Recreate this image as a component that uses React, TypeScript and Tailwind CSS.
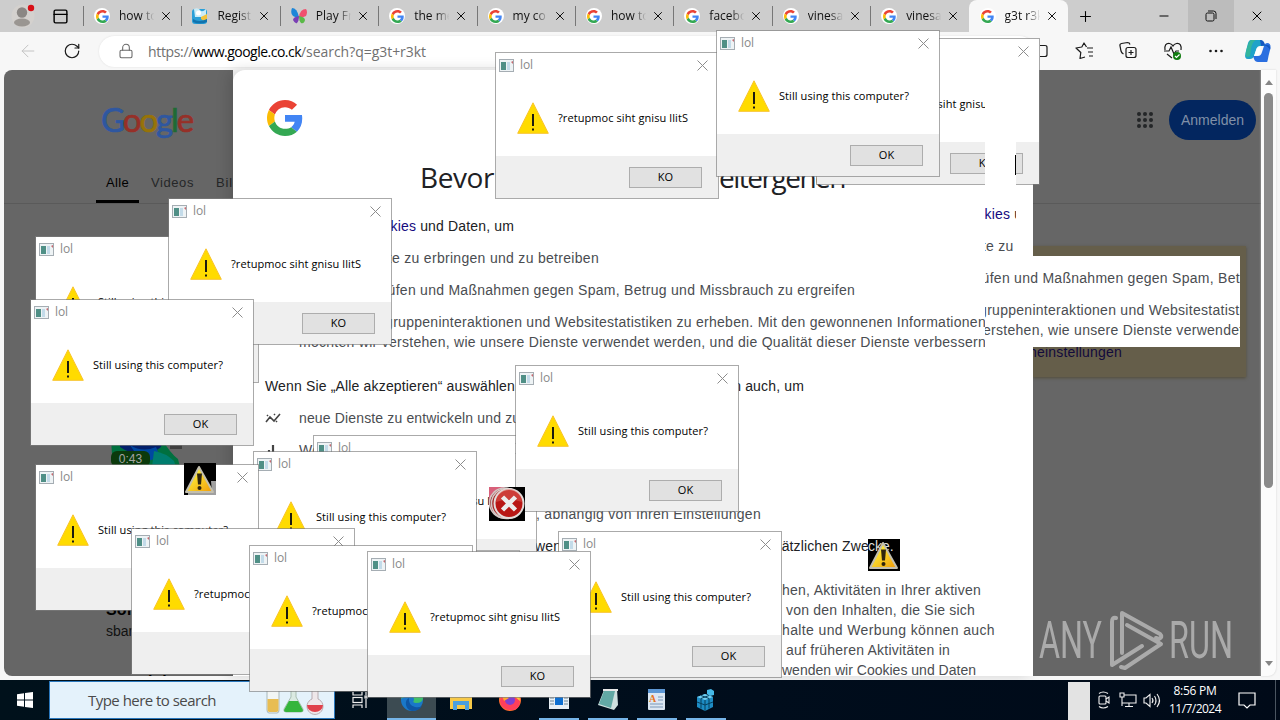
import { ReactNode, useLayoutEffect, useRef, useState } from 'react'
import { ArrowLeft, Lock, Minus, PanelTop, Plus, RotateCw, X } from 'lucide-react'
import clsx from 'clsx'

const UI = "font-['Open_Sans','Noto_Sans',sans-serif]"
const ARIAL = "font-['Liberation_Sans',Arial,sans-serif]"

// Spreads its text so that it is exactly `w` pixels wide
function Fit({ w, className, children }: { w: number; className?: string; children: ReactNode }) {
  const ref = useRef<HTMLSpanElement>(null)
  const [spacing, setSpacing] = useState(0)

  useLayoutEffect(() => {
    const el = ref.current
    if (!el) return
    const natural = el.getBoundingClientRect().width
    setSpacing((w - natural) / (el.textContent || ' ').length)
  }, [w])

  return (
    <span ref={ref} className={clsx('inline-block w-fit whitespace-pre', className)} style={{ letterSpacing: spacing }}>
      {children}
    </span>
  )
}

function GoogleG({ className }: { className: string }) {
  return (
    <svg viewBox="0 0 48 48" className={className}>
      <path fill="#EA4335" d="M24 9.5c3.54 0 6.71 1.22 9.21 3.6l6.85-6.85C35.9 2.38 30.47 0 24 0 14.62 0 6.51 5.38 2.56 13.22l7.98 6.19C12.43 13.72 17.74 9.5 24 9.5z" />
      <path fill="#4285F4" d="M46.98 24.55c0-1.57-.15-3.09-.38-4.55H24v9.02h12.94c-.58 2.96-2.26 5.48-4.78 7.18l7.73 6c4.51-4.18 7.09-10.36 7.09-17.65z" />
      <path fill="#FBBC05" d="M10.53 28.59c-.48-1.45-.76-2.99-.76-4.59s.27-3.14.76-4.59l-7.98-6.19C.92 16.46 0 20.12 0 24c0 3.88.92 7.54 2.56 10.78l7.97-6.19z" />
      <path fill="#34A853" d="M24 48c6.48 0 11.93-2.13 15.89-5.81l-7.73-6c-2.15 1.45-4.92 2.3-8.16 2.3-6.26 0-11.57-4.22-13.47-9.91l-7.98 6.19C6.51 42.62 14.62 48 24 48z" />
    </svg>
  )
}

/* ---------- browser chrome ---------- */

const tabs = [
  { title: 'how to', icon: 'google' },
  { title: 'Registr', icon: 'sun' },
  { title: 'Play Fr', icon: 'butterfly' },
  { title: 'the me', icon: 'google' },
  { title: 'my co', icon: 'google' },
  { title: 'how to', icon: 'google' },
  { title: 'facebo', icon: 'google' },
  { title: 'vinesa', icon: 'google' },
  { title: 'vinesa', icon: 'google' },
]

function TabIcon({ icon }: { icon: string }) {
  if (icon === 'sun') {
    return (
      <svg viewBox="0 0 16 16" className="size-4">
        <rect x="0" y="1" width="15" height="15" rx="3" fill="#2a9fd8" />
        <path d="M2 1q4-2 6 1t6-1v8H3z" fill="#c9ecf8" />
        <circle cx="6.500" cy="5" r="2.500" fill="#fff" />
        <path d="M9 9l6-3v5q-2 3-6 0z" fill="#f3c33b" />
        <path d="M1 11q6 4 14 0v3q-7 3-14 0z" fill="#1173ae" />
      </svg>
    )
  }
  if (icon === 'butterfly') {
    return (
      <svg viewBox="0 0 16 16" className="size-4">
        <path d="M8 9Q6 0 1 0q-2 5 1 8 3 2 6 1z" fill="#1d86d8" />
        <path d="M8 8q-6 1-6 4 2 4 4 3 2-2 2-7z" fill="#7a3fb4" />
        <path d="M8 9q1-8 7-8 2 3 0 7-4 2-7 1z" fill="#f0506e" />
        <path d="M8 8q6 1 6 4-1 4-4 3-2-2-2-7z" fill="#59b947" />
      </svg>
    )
  }
  return (
    <span className="flex size-4 items-center justify-center rounded-full bg-white">
      <GoogleG className="size-[13px]" />
    </span>
  )
}

function TabBody({ title, icon }: { title: string; icon: string }) {
  return (
    <>
      <TabIcon icon={icon} />
      <span className="ml-[9px] w-[36px] overflow-hidden text-[12px] whitespace-nowrap text-[#111] [mask-image:linear-gradient(to_right,black_60%,transparent_98%)]">
        {title}
      </span>
      <X className="ml-[4px] size-[14px] shrink-0" strokeWidth={1.6} />
    </>
  )
}

function TabStrip() {
  return (
    <div className="flex h-8 shrink-0 bg-[#cdcdcd]">
      <div className="flex w-[83px] shrink-0 items-center">
        <svg viewBox="0 0 24 24" className="ml-[11px] size-6">
          <circle cx="12" cy="12" r="11.500" fill="#d4d1ce" />
          <circle cx="11" cy="8.500" r="5.200" fill="#8b8784" />
          <ellipse cx="11" cy="18.500" rx="8" ry="4" fill="#9a9692" />
          <circle cx="20" cy="4" r="3.200" fill="#d80f16" />
        </svg>
        <PanelTop className="ml-[17px] size-[17px]" strokeWidth={2} />
      </div>
      {tabs.map((t, i) => (
        <div key={i} className="flex w-[98.400px] shrink-0 items-center">
          <div className="mr-[10px] h-5 w-px bg-[#777]" />
          <TabBody {...t} />
        </div>
      ))}
      <div className="flex w-[99px] shrink-0 items-center rounded-t-lg bg-[#f7f7f7] pl-[11px]">
        <TabBody title="g3t r3k" icon="google" />
      </div>
      <div className="flex flex-1 items-center">
        <Plus className="ml-[9px] size-[17px]" strokeWidth={1.5} />
        <Minus className="ml-[63px] size-[14px]" strokeWidth={1.7} />
        <div className="ml-[17px] flex h-8 w-[46px] items-center justify-center bg-[#bcbcbc]">
          <svg viewBox="0 0 12 12" className="size-[12px]" fill="none" stroke="#111">
            <rect x="1" y="3" width="8" height="8" rx="1.500" />
            <path d="M3 1h5.500Q11 1 11 3.500V9" />
          </svg>
        </div>
        <X className="ml-[15px] size-[16px]" strokeWidth={1.5} />
      </div>
    </div>
  )
}

function ToolbarIcons() {
  return (
    <svg viewBox="0 0 240 38" className="h-[38px] w-[240px]" fill="none" stroke="#1a1a1a" strokeWidth="1.200">
      <path d="M0 13.500h5q2 0 2 2v7q0 2-2 2H0" />
      {/* favourites */}
      <path d="M45 25l-5 1.500.8-6L36 16l5.800-1L44 11l2.500 4M47 16h6M48 20h5M49 24h4" strokeLinejoin="round" />
      {/* collections */}
      <rect x="86" y="15.500" width="10" height="10" rx="2" />
      <path d="M91 18v5M88.500 20.500h5M83.500 22q-2-1-2.500-3L80 14q-.5-2 1.500-2.500l6-1q2 0 2.500 2" />
      {/* essentials */}
      <path d="M125 18q-1-7 4.500-6.500Q132 12 133 14q1-2 3.500-2.500Q142 11 141 18M124 19h5l2-4 3 7 2-3h3M127 22l5 4" />
      <circle cx="137" cy="24" r="4" fill="#107c10" stroke="none" />
      <path d="M135 24l1.500 1.500 3-3" stroke="#fff" />
      <g fill="#1a1a1a" stroke="none">
        <circle cx="170.500" cy="19" r="1.300" />
        <circle cx="176" cy="19" r="1.300" />
        <circle cx="181.500" cy="19" r="1.300" />
      </g>
      {/* copilot */}
      <g stroke="none">
        <path d="M211 8h9q3 0 4 3l1 3h-5q-3 0-4 4l-2 6q-1 3-4 3h-2q-4 0-2.500-6l2-8q1-5 3.500-5z" fill="#1fa3c9" />
        <path d="M211 8h5q-4 2-5 9l-1 7q-3 2-4 0-1-3 2-11 1-4 3-5z" fill="#34b59c" />
        <path d="M227 30h-9q-3 0-4-3l-1-3h5q3 0 4-4l2-6q1-3 3-3 4 0 3.500 5l-2 8q-1 6-1.500 6z" fill="#2b6fe0" />
        <path d="M220 8q4 0 5 5l3 0q3 1 2 5-3-6-9-4z" fill="#1557c0" />
        <path d="M217 16l4-1-2 8-5 1z" fill="#fff" />
      </g>
    </svg>
  )
}

function Toolbar() {
  return (
    <div className="flex h-[38px] shrink-0 items-center bg-[#f7f7f7]">
      <ArrowLeft className="ml-[18px] size-5 shrink-0 text-[#c4c4c4]" strokeWidth={1.2} />
      <RotateCw className="ml-[25px] size-[18px] shrink-0 text-[#1a1a1a]" strokeWidth={1.6} />
      <div className="ml-[18px] flex h-[31px] w-[936px] shrink-0 items-center rounded-full bg-white shadow-[0_0_2px_#ddd]">
        <Lock className="ml-[19px] size-4 text-[#6a6a6a]" strokeWidth={1.6} />
        <span className="ml-[14px] flex text-[14px] text-[#707070]">
          <Fit w={45}>https://</Fit>
          <Fit w={108} className="text-black">www.google.co.ck</Fit>
          <Fit w={125}>/search?q=g3t+r3kt</Fit>
        </span>
      </div>
      <div className="ml-[5px] shrink-0">
        <ToolbarIcons />
      </div>
    </div>
  )
}

/* ---------- page ---------- */

const bullet = (path: ReactNode) => (
  <svg viewBox="0 0 16 16" className="mt-[2px] mr-[18px] size-4 shrink-0" fill="none" stroke="#444" strokeWidth="1.600">
    {path}
  </svg>
)

function ConsentText() {
  return (
    <div className={clsx('flex w-[760px] flex-col gap-3 text-[14px] leading-5 text-[#4a4d51]', ARIAL)}>
      <p className="h-5 text-[#202124]">
        <Fit w={249}>
          Wir verwenden <span className="text-[#140a80]">Cookies</span> und Daten, um
        </Fit>
      </p>
      <p className="h-5 pl-[34px]">
        <Fit w={93}>Google-Dienst</Fit>
        <Fit w={207}>e zu erbringen und zu betreiben</Fit>
      </p>
      <p className="h-5 pl-[34px]"><Fit w={556}>Ausfälle zu prüfen und Maßnahmen gegen Spam, Betrug und Missbrauch zu ergreifen</Fit></p>
      <div className="flex flex-col pl-[34px]">
        <Fit w={687}>Daten zu Zielgruppeninteraktionen und Websitestatistiken zu erheben. Mit den gewonnenen Informationen</Fit>
        <Fit w={687}>möchten wir verstehen, wie unsere Dienste verwendet werden, und die Qualität dieser Dienste verbessern</Fit>
      </div>
      <p className="mt-3 h-5 text-[#202124]">
        <Fit w={250}>Wenn Sie „Alle akzeptieren“ auswählen</Fit>
        <Fit w={289}>, verwenden wir Cookies und Daten auch, um</Fit>
      </p>
      <div className="flex h-5">
        {bullet(<path d="M1 12l4-5 4 4 6-7M9 5l1-1M2 5l1 1M11 11l1 1" />)}
        <Fit w={296}>neue Dienste zu entwickeln und zu verbessern</Fit>
      </div>
      <div className="flex h-5">
        {bullet(<path d="M4 14V8M8 14V3M12 14v-4" strokeWidth="2.200" />)}
        <Fit w={330}>Werbung auszuliefern und ihre Wirkung zu messen</Fit>
      </div>
      <p className="h-5 pl-[34px]"><Fit w={230}>personalisierte Inhalte anzuzeigen</Fit></p>
      <p className="h-5 pl-[34px]">
        <Fit w={237}>personalisierte Werbung anzuzeigen</Fit>
        <Fit w={225}>, abhängig von Ihren Einstellungen</Fit>
      </p>
      <p className="h-5 text-[#202124]">
        <Fit w={270}>Wenn Sie „Alle ablehnen“ auswählen, ver</Fit>
        <Fit w={360}>wenden wir Cookies nicht für diese zusätzlichen Zwecke.</Fit>
      </p>
      <div className="mt-3 flex flex-col pl-[517px]">
        <Fit w={199}>hen, Aktivitäten in Ihrer aktiven</Fit>
        <Fit w={193}> von den Inhalten, die Sie sich</Fit>
        <Fit w={213}>halte und Werbung können auch</Fit>
        <Fit w={168}> auf früheren Aktivitäten in</Fit>
        <Fit w={194}>wenden wir Cookies und Daten</Fit>
      </div>
    </div>
  )
}

function AnyRun() {
  return (
    <svg viewBox="0 0 196 64" className="h-16 w-[196px] opacity-80" fill="#bcbcbc">
      <g fontFamily="Roboto, sans-serif" fontSize="52" fontWeight="400">
        <text x="1" y="49" textLength="63" lengthAdjust="spacingAndGlyphs">ANY</text>
        <text x="131" y="49" textLength="64" lengthAdjust="spacingAndGlyphs">RUN</text>
      </g>
      <g fill="none" stroke="#bcbcbc" strokeWidth="4" strokeLinejoin="round" strokeLinecap="round">
        <path d="M84 44V4l38 21q3 3-1 5l-3-1" />
        <path d="M78 9q-4-1-4 4v43l30-19" />
        <path d="M89 16l34 19-36 24-4-1" />
      </g>
    </svg>
  )
}

function Page() {
  return (
    <div className="flex h-[606px] shrink-0 pl-1">
      <div className={clsx('flex w-[229px] shrink-0 flex-col overflow-hidden rounded-l-lg bg-[#666] [&>*]:shrink-0', ARIAL)}>
        <div className="mt-[27px] ml-[97px] h-[44px] font-['Lato',sans-serif] text-[33px] leading-[44px] [-webkit-text-stroke:0.700px]">
          <Fit w={91}>
            <span className="text-[#2f57a0]">G</span>
            <span className="text-[#963028]">o</span>
            <span className="text-[#977308]">o</span>
            <span className="text-[#2f57a0]">g</span>
            <span className="text-[#1f6b34]">l</span>
            <span className="text-[#963028]">e</span>
          </Fit>
        </div>
        <div className="mt-[26px] flex h-[37px] border-b border-[#5a5a5a] pl-[92px] text-[13px] leading-[32px] whitespace-nowrap text-[#252628]">
          <span className="h-[36px] w-[43px] shrink-0 border-b-3 border-black pl-[10px] text-black"><Fit w={23}>Alle</Fit></span>
          <span className="pl-[12px]"><Fit w={43}>Videos</Fit></span>
          <span className="pl-[22px]"><Fit w={38}>Bilder</Fit></span>
        </div>
        <div className="mt-[235px] ml-[104px] flex h-[28px] w-[79px] items-end overflow-hidden rounded-lg">
          <svg viewBox="0 0 79 28" className="h-[28px] w-[79px] shrink-0">
            <path d="M4 0h50q8 14 16 20l2 8H8Q2 16 4 0z" fill="#00703f" />
            <path d="M12 0h42q2 9-8 12-20 6-34-4z" fill="#03206b" />
            <path d="M22 6q12 8 26 2l4 10-18 6z" fill="#0048a0" />
            <path d="M46 12q12 2 20 10l2 6H44z" fill="#007d6e" />
            <path d="M62 4h12v6H62z" fill="#3f3f3f" />
          </svg>
          <span className="-ml-[76px] w-[39px] rounded-md bg-[#0b3a0c] text-center text-[12px] leading-4 text-[#a5a5a5]">0:43</span>
        </div>
        <div className="mt-[133px] ml-[102px] text-[16px] leading-5 font-bold text-black">Software</div>
        <div className="mt-px ml-[102px] text-[14px] leading-5 text-[#111]">sbar...</div>
        <div className="mt-[31px] ml-[144px] text-[16px] leading-5 font-bold text-black">lol.exe</div>
      </div>

      <div className="h-[606px] w-[800px] shrink-0 overflow-hidden rounded-tl-xl bg-white pl-8 shadow-[-4px_0_14px_rgba(0,0,0,0.15)]">
        <GoogleG className="mt-[30px] ml-[2px] size-9" />
        <h1 className="mt-[22px] mb-[19px] pl-[155px] font-['Open_Sans',sans-serif] text-[28px] leading-[39px] text-[#202124]">
          <Fit w={74}>Bevor</Fit>
          <Fit w={225}> Sie zu Google w</Fit>
          <Fit w={126}>eitergehen</Fit>
        </h1>
        <ConsentText />
      </div>

      <div className={clsx('flex w-[228px] shrink-0 flex-col overflow-hidden bg-[#666]', ARIAL)}>
        <div className="flex h-[134px] items-start border-b border-[#5a5a5a] pt-[30px] pl-[104px]">
          <svg viewBox="0 0 16 16" className="mt-[12px] size-4" fill="#242628">
            {[2, 8, 14].map(x => [2, 8, 14].map(y => <circle key={`${x}-${y}`} cx={x} cy={y} r="2" />))}
          </svg>
          <div className="ml-[16px] flex h-10 w-[87px] items-center justify-center rounded-full bg-[#03265f] text-[14px] text-[#8090a8]">
            <Fit w={63}>Anmelden</Fit>
          </div>
        </div>
        <div className="mt-[42px] h-[131px] w-[213px] bg-[#655e4a] pt-[96px] shadow-[0_1px_3px_#524c38]">
          <p className="-ml-[4px] text-[14px] leading-5 text-[#120a3c]"><Fit w={93}>heinstellungen</Fit></p>
        </div>
        <div className="mt-auto mb-[3px] ml-[5px]"><AnyRun /></div>
      </div>

      <div className="flex w-[15px] shrink-0 flex-col items-center rounded-br-lg bg-[#fcfcfc] shadow-[0_0_2px_#ccc]">
        <div className="mt-[10px] border-x-4 border-b-5 border-x-transparent border-b-[#858585]" />
        <div className="mt-[8px] h-[395px] w-[9px] rounded-full bg-[#8b8b8b]" />
        <div className="mt-auto mb-[10px] border-x-4 border-t-5 border-x-transparent border-t-[#858585]" />
      </div>
    </div>
  )
}

/* ---------- message boxes ---------- */

function Dialog({ x, y, flipped }: { x: number; y: number; flipped?: boolean }) {
  return (
    <div
      className="absolute h-[147px] w-[224px] border border-[#7d7d7d]/65 bg-white bg-clip-padding text-[11px] text-black"
      style={{ left: x, top: y }}
    >
      <div className="flex h-[24px] items-center pl-[3px]">
        <svg viewBox="0 0 15 13" className="h-[13px] w-[15px]">
          <rect x=".500" y=".500" width="14" height="12" fill="#eef3f5" stroke="#a5adb3" />
          <rect x="2" y="3" width="5" height="8" fill="#4f8f86" />
          <rect x="8" y="3" width="3" height="8" fill="#c3dbe9" />
          <path d="M12 3l2-1v3z" fill="#c6696f" />
        </svg>
        <span className="ml-[6px] flex-1 text-[12px] text-[#8a8a8a]"><Fit w={13}>lol</Fit></span>
        <svg viewBox="0 0 11 11" className="mr-[10px] size-[11px]" stroke="#8c8c8c">
          <path d="M.5.5l10 10M10.500.5L.5 10.500" />
        </svg>
      </div>
      <div className="flex h-[79px] items-center pl-[21px]">
        <svg viewBox="0 0 32 32" className="mt-[2px] size-8">
          <path d="M16 .8L31.300 31.300H.7z" fill="#ffdb00" stroke="#f8c32c" />
          <path d="M16 12v12M16 26.500v2" stroke="#111" strokeWidth="1.900" />
        </svg>
        <Fit w={130} className="mt-[3px] ml-[9px]">{flipped ? '?retupmoc siht gnisu llitS' : 'Still using this computer?'}</Fit>
      </div>
      <div className="flex h-[42px] items-start justify-end bg-[#efefef] pt-[11px] pr-[16px]">
        <div className="flex h-[21px] w-[73px] items-center justify-center border border-[#adadad] bg-[#e1e1e1]">
          {flipped ? 'KO' : 'OK'}
        </div>
      </div>
    </div>
  )
}

function WarningStamp({ x, y, children }: { x: number; y: number; children?: ReactNode }) {
  return (
    <svg viewBox="0 0 32 32" className="absolute size-8" style={{ left: x, top: y }}>
      <defs>
        <linearGradient id="gold" x1="0" y1="0" x2="1" y2="1">
          <stop offset=".2" stopColor="#fff23a" />
          <stop offset="1" stopColor="#f09a08" />
        </linearGradient>
      </defs>
      <rect width="32" height="32" />
      {children}
      <path d="M15 4L29 29H2z" fill="url(#gold)" stroke="#c3bfae" strokeWidth="2" strokeLinejoin="round" />
      <path d="M13 10.500h5l-1 11h-3z" fill="#30250e" />
      <circle cx="15.500" cy="25" r="2" fill="#30250e" />
    </svg>
  )
}

function ErrorStamp() {
  return (
    <svg viewBox="0 0 36 34" className="absolute top-[487px] left-[489px] h-[34px] w-9">
      <rect width="36" height="34" />
      <path d="M0 0h16L3 13H0z" fill="#d8607a" />
      <circle cx="15.500" cy="16" r="15" fill="#8b1b1d" stroke="#d4c6c4" strokeWidth="1.500" />
      <circle cx="17.500" cy="16.500" r="15" fill="#a41d1d" stroke="#d4c6c4" strokeWidth="1.500" />
      <circle cx="20" cy="16.500" r="14.500" fill="#b81715" stroke="#e3dcda" strokeWidth="2" />
      <path d="M7 15a13 13 0 0 1 26 0q-13-5-26 0z" fill="#e2635c" opacity=".5" />
      <path d="M13.500 10l13 13M26.500 10l-13 13" stroke="#ececec" strokeWidth="4.500" />
    </svg>
  )
}

// Stale screen blocks left behind, showing a shifted copy of the consent text
function Smear() {
  return (
    <>
      <div className="absolute top-[92px] left-[985px] h-[164px] w-[31px] overflow-hidden bg-white">
        <div className="-ml-[126px] pt-[112px]"><ConsentText /></div>
      </div>
      <div className="absolute top-[155px] left-[1015px] h-[20px] w-px bg-black" />
      <div className="absolute top-[256px] left-[985px] h-[91px] w-[255px] overflow-hidden bg-white">
        <div className="-mt-[52px] -ml-[126px]"><ConsentText /></div>
      </div>
    </>
  )
}

const dialogs = [
  { x: 816, y: 38, flipped: true },
  { x: 495, y: 52, flipped: true },
  { x: 716, y: 30 },
  { x: 35, y: 236 },
  { x: 168, y: 198, flipped: true },
  { x: 30, y: 299 },
  { x: 313, y: 435, flipped: true },
  { x: 253, y: 451 },
  { x: 35, y: 464 },
  { x: 131, y: 528, flipped: true },
  { x: 249, y: 545, flipped: true },
  { x: 515, y: 365 },
  { x: 558, y: 531 },
  { x: 367, y: 551, flipped: true },
]

/* ---------- taskbar ---------- */

function TaskItem({ active, running, children }: { active?: boolean; running?: boolean; children: ReactNode }) {
  return (
    <div className={clsx('flex w-[49px] shrink-0 flex-col items-center', active && 'bg-[#3c4b52]')}>
      <svg viewBox="0 0 24 24" className="mt-[8px] size-6">{children}</svg>
      <div className={clsx('mt-auto h-[2px]', active ? 'w-full' : 'w-10', (active || running) && 'bg-[#76b5e8]')} />
    </div>
  )
}

function Taskbar() {
  return (
    <div className="flex h-10 shrink-0 bg-[linear-gradient(90deg,#00111b,#000d1c_60%,#000a18)]">
      <div className="flex w-[49px] items-center justify-center">
        <svg viewBox="0 0 16 16" className="size-4" fill="#fff">
          <path d="M0 2.300L7 1.300V7.500H0zM8 1.100L16 0V7.500H8zM0 8.500H7V14.700L0 13.700zM8 8.500H16V16L8 14.900z" />
        </svg>
      </div>
      <div className="mt-px flex h-[38px] w-[286px] items-center border border-[#2a78bd] bg-[#e4f2fb] pl-[38px] text-[15px] text-[#4a4a4a]">
        <Fit w={128}>Type here to search</Fit>
        <svg viewBox="0 0 64 34" className="ml-[46px] h-[34px] w-16">
          <path d="M2 4h17M5 4v23q0 3 2 3h8q2 0 2-3V4" fill="#f2f6f5" stroke="#a9b8bb" />
          <path d="M5.500 16h11v11q0 2-2 2h-7q-2 0-2-2z" fill="#e8bd52" />
          <path d="M29 2v12l-7 12q-1 3 2 3h15q3 0 2-3l-7-12V2" fill="#dbeae2" stroke="#a8bdb0" />
          <path d="M27 18h9l5 9q0 2-2 2H24q-2 0-2-2z" fill="#35b53c" />
          <path d="M50 2v14a8 8 0 1 0 6 0V2" fill="#eee7ea" stroke="#b8abb0" />
          <path d="M45 22h16a8 7 0 0 1-16 0z" fill="#e0404b" />
        </svg>
      </div>
      <div className="flex w-[52px] items-center pl-[17px]">
        <svg viewBox="0 0 20 20" className="size-5" fill="none" stroke="#eee" strokeWidth="1.200">
          <path d="M1 2v3h9V2M1 18v-3h9v3M14 2v3M14 9v9" />
          <rect x="1" y="7.500" width="9" height="5" />
          <rect x="13" y="6" width="2" height="2" />
        </svg>
      </div>
      <TaskItem active>
        <circle cx="12" cy="12" r="11" fill="#1a78c8" />
        <path d="M1 11Q4 1 13 1q10 1 10 9 0 5-7 5-4 0-2-3 0-5-6-4-5 1-7 3z" fill="#3fc06b" />
        <path d="M9 10q-1 7 6 9 4 1 7-1-3 5-10 5-5-1-6-6-1-5 3-7z" fill="#0f56a3" />
      </TaskItem>
      <TaskItem>
        <path d="M1 5h8l2 2h12v14H1z" fill="#f7c948" />
        <path d="M4 13h16v9h-4v-5H8v5H4z" fill="#4a9fe0" />
      </TaskItem>
      <TaskItem>
        <circle cx="12" cy="12" r="11" fill="#ff6b2d" />
        <path d="M4 5q9-3 17 4 3 10-5 13-13 1-14-9z" fill="#ff3f5b" />
        <path d="M14 1q8 5 8 12l-5-4z" fill="#ffcb35" />
        <circle cx="12" cy="12" r="5" fill="#8140d0" />
        <path d="M4 8q5-1 7 2l-5 3z" fill="#ffa52e" />
      </TaskItem>
      <TaskItem running>
        <rect x="2" y="3" width="20" height="18" fill="#e8eff4" />
        <path d="M3 10h4M3 13h4M3 16h4M17 10h4M17 13h4M17 16h4" stroke="#6d8596" />
        <rect x="8" y="8" width="8" height="9" fill="#0f6fd0" />
      </TaskItem>
      <TaskItem running>
        <path d="M8 2l13-1 1 16-4 5L2 17z" fill="#cfe0df" />
        <path d="M8 3l11 0-4 17L3 16z" fill="#62a9a5" />
        <path d="M7 2h15" stroke="#e8e8e8" strokeWidth="2" />
      </TaskItem>
      <TaskItem running>
        <rect x="3" y="1" width="17" height="21" rx="1" fill="#dce7f2" />
        <rect x="3" y="1" width="17" height="4" fill="#5d97d4" />
        <path d="M13 9h5M13 12h5M5 16h13M5 19h13" stroke="#7b98b8" />
        <text x="4" y="14" fontSize="10" fontWeight="700" fill="#e77420" fontFamily="Liberation Serif, serif">A</text>
      </TaskItem>
      <TaskItem running>
        <path d="M3 9l8-3 8 3v10l-8 4-8-4z" fill="#1d8cc4" />
        <path d="M3 9l8 3 8-3-8-3z" fill="#73d0f2" />
        <path d="M3 14l8 3 8-3M7 7.500l8 3v10M15 7.500l-8 3v10M11 12v11" stroke="#06405f" fill="none" />
        <path d="M13 2l4-1 3 2v4l-4 1-3-2z" fill="#45b9e8" />
      </TaskItem>

      <div className="ml-auto flex items-center">
        <div className="mt-px h-[38px] w-[22px] bg-[#e3e3e3]" />
        <svg viewBox="0 0 72 20" className="ml-[5px] h-5 w-[72px]" fill="none" stroke="#f0f0f0" strokeWidth="1.100">
          <rect x="4" y="6" width="7" height="8" rx="1" />
          <path d="M11 9l3-2v6l-3-2M4 3.500q4-3 9 0M4 16.500q4 3 9 0" />
          <path d="M29 5h12v8H27v-3M34 13v3M30 16.500h8M25 3h4v4h-4zM27 7v9" />
          <path d="M49 8v5h2l4 3.500V4.500L51 8zM57 8q2 2.500 0 5M59.500 6q3 4.500 0 9M62 4q5 6.500 0 13" />
        </svg>
        <div className="ml-px flex w-[54px] flex-col items-center text-[12px] leading-[18px] text-white">
          <Fit w={43}>8:56 PM</Fit>
          <Fit w={52}>11/7/2024</Fit>
        </div>
        <svg viewBox="0 0 18 18" className="ml-[16px] size-[18px]" fill="none" stroke="#fff" strokeWidth="1.200">
          <path d="M1 2h16v12h-5l-3 3-3-3H1z" />
        </svg>
        <div className="mr-[4px] ml-[19px] h-10 w-px bg-[#4a5560]" />
      </div>
    </div>
  )
}

export default function App() {
  return (
    <div className={clsx('relative flex h-[720px] w-[1280px] flex-col overflow-hidden bg-[#f7f7f7]', UI)}>
      <TabStrip />
      <Toolbar />
      <Page />
      <div className="flex-1" />
      <Taskbar />

      {dialogs.map(d => <Dialog key={`${d.x}-${d.y}`} {...d} />)}
      <Smear />
      <WarningStamp x={184} y={463}>
        <path d="M27 18h5v14H4v-2h24z" fill="#a0a0a0" />
      </WarningStamp>
      <WarningStamp x={868} y={539}>
        <text x="0" y="12" fontSize="14" fill="#dfdedb" fontFamily="Liberation Sans, sans-serif">cke.</text>
      </WarningStamp>
      <ErrorStamp />
    </div>
  )
}
